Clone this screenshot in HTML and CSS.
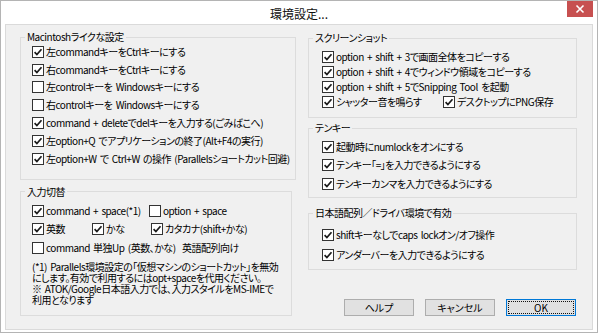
FILE: index.html
```html
<!DOCTYPE html>
<html lang="ja">
<head>
<meta charset="utf-8">
<title>環境設定...</title>
<link rel="stylesheet" href="styles.css">
</head>
<body>
<div class="window">
  <div class="titlebar">
    <span class="title">環境設定...</span>
    <span class="close"><svg width="10" height="10" viewBox="0 0 10 10"><path d="M1.5 1.5 L8.5 8.5 M8.5 1.5 L1.5 8.5" stroke="#fff" stroke-width="1.6"/></svg></span>
  </div>
  <div class="client">
    <div class="col col-left">
      <fieldset class="group g-mac">
        <legend>Macintoshライクな設定</legend>
        <div class="gbody">
          <div class="row"><span class="cb on"><svg viewBox="0 0 10 10"><path d="M1.6 5.2 L3.9 7.6 L8.5 2.2"/></svg></span><span class="lbl">左commandキーをCtrlキーにする</span></div>
          <div class="row"><span class="cb on"><svg viewBox="0 0 10 10"><path d="M1.6 5.2 L3.9 7.6 L8.5 2.2"/></svg></span><span class="lbl">右commandキーをCtrlキーにする</span></div>
          <div class="row"><span class="cb"></span><span class="lbl">左controlキーを Windowsキーにする</span></div>
          <div class="row"><span class="cb"></span><span class="lbl">右controlキーを Windowsキーにする</span></div>
          <div class="row"><span class="cb on"><svg viewBox="0 0 10 10"><path d="M1.6 5.2 L3.9 7.6 L8.5 2.2"/></svg></span><span class="lbl">command + deleteでdelキーを入力する(ごみばこへ)</span></div>
          <div class="row"><span class="cb on"><svg viewBox="0 0 10 10"><path d="M1.6 5.2 L3.9 7.6 L8.5 2.2"/></svg></span><span class="lbl">左option+Q でアプリケーションの終了(Alt+F4の実行)</span></div>
          <div class="row"><span class="cb on"><svg viewBox="0 0 10 10"><path d="M1.6 5.2 L3.9 7.6 L8.5 2.2"/></svg></span><span class="lbl">左option+W で Ctrl+W の操作 (Parallelsショートカット回避)</span></div>
        </div>
      </fieldset>
      <fieldset class="group g-input">
        <legend>入力切替</legend>
        <div class="gbody">
          <div class="row">
            <span class="item w117"><span class="cb on"><svg viewBox="0 0 10 10"><path d="M1.6 5.2 L3.9 7.6 L8.5 2.2"/></svg></span><span class="lbl">command + space(*1)</span></span>
            <span class="item"><span class="cb"></span><span class="lbl">option + space</span></span>
          </div>
          <div class="row">
            <span class="item w60"><span class="cb on"><svg viewBox="0 0 10 10"><path d="M1.6 5.2 L3.9 7.6 L8.5 2.2"/></svg></span><span class="lbl">英数</span></span>
            <span class="item w59"><span class="cb on"><svg viewBox="0 0 10 10"><path d="M1.6 5.2 L3.9 7.6 L8.5 2.2"/></svg></span><span class="lbl">かな</span></span>
            <span class="item"><span class="cb on"><svg viewBox="0 0 10 10"><path d="M1.6 5.2 L3.9 7.6 L8.5 2.2"/></svg></span><span class="lbl">カタカナ(shift+かな)</span></span>
          </div>
          <div class="row">
            <span class="item"><span class="cb"></span><span class="lbl">command 単独Up (英数、かな)&nbsp; 英語配列向け</span></span>
          </div>
          <p class="note note-first">(*1) Parallels環境設定の「仮想マシンのショートカット」を無効<br>にします。有効で利用するにはopt+spaceを代用ください。</p>
          <p class="note">※ ATOK/Google日本語入力では、入力スタイルをMS-IMEで<br>利用となります</p>
        </div>
      </fieldset>
    </div>
    <div class="col col-right">
      <fieldset class="group g-shot">
        <legend>スクリーンショット</legend>
        <div class="gbody">
          <div class="row"><span class="cb on"><svg viewBox="0 0 10 10"><path d="M1.6 5.2 L3.9 7.6 L8.5 2.2"/></svg></span><span class="lbl">option + shift + 3で画面全体をコピーする</span></div>
          <div class="row"><span class="cb on"><svg viewBox="0 0 10 10"><path d="M1.6 5.2 L3.9 7.6 L8.5 2.2"/></svg></span><span class="lbl">option + shift + 4でウィンドウ領域をコピーする</span></div>
          <div class="row"><span class="cb on"><svg viewBox="0 0 10 10"><path d="M1.6 5.2 L3.9 7.6 L8.5 2.2"/></svg></span><span class="lbl">option + shift + 5でSnipping Tool を起動</span></div>
          <div class="row row-last">
            <span class="item w121"><span class="cb on"><svg viewBox="0 0 10 10"><path d="M1.6 5.2 L3.9 7.6 L8.5 2.2"/></svg></span><span class="lbl">シャッター音を鳴らす</span></span>
            <span class="item"><span class="cb on"><svg viewBox="0 0 10 10"><path d="M1.6 5.2 L3.9 7.6 L8.5 2.2"/></svg></span><span class="lbl">デスクトップにPNG保存</span></span>
          </div>
        </div>
      </fieldset>
      <fieldset class="group g-ten">
        <legend>テンキー</legend>
        <div class="gbody">
          <div class="row"><span class="cb on"><svg viewBox="0 0 10 10"><path d="M1.6 5.2 L3.9 7.6 L8.5 2.2"/></svg></span><span class="lbl">起動時にnumlockをオンにする</span></div>
          <div class="row row-b"><span class="cb on"><svg viewBox="0 0 10 10"><path d="M1.6 5.2 L3.9 7.6 L8.5 2.2"/></svg></span><span class="lbl">テンキー「=」を入力できるようにする</span></div>
          <div class="row row-c"><span class="cb on"><svg viewBox="0 0 10 10"><path d="M1.6 5.2 L3.9 7.6 L8.5 2.2"/></svg></span><span class="lbl">テンキーカンマを入力できるようにする</span></div>
        </div>
      </fieldset>
      <fieldset class="group g-jp">
        <legend>日本語配列／ドライバ環境で有効</legend>
        <div class="gbody">
          <div class="row"><span class="cb on"><svg viewBox="0 0 10 10"><path d="M1.6 5.2 L3.9 7.6 L8.5 2.2"/></svg></span><span class="lbl">shiftキーなしでcaps lockオン/オフ操作</span></div>
          <div class="row row-c"><span class="cb on"><svg viewBox="0 0 10 10"><path d="M1.6 5.2 L3.9 7.6 L8.5 2.2"/></svg></span><span class="lbl">アンダーバーを入力できるようにする</span></div>
        </div>
      </fieldset>
      <div class="buttons">
        <button class="btn" type="button">ヘルプ</button>
        <button class="btn" type="button">キャンセル</button>
        <button class="btn btn-default" type="button">OK</button>
      </div>
    </div>
  </div>
</div>
</body>
</html>
```
FILE: styles.css
```css
html, body {
  margin: 0;
  padding: 0;
  background: #fff;
}
body {
  font-family: "Noto Sans CJK JP", "Noto Sans", sans-serif;
  font-size: 10px;
  letter-spacing: -0.5px;
  word-spacing: 1.5px;
  color: #000;
  font-feature-settings: "palt";
}
.window {
  width: 598px;
  height: 333px;
  box-sizing: border-box;
  border: 1px solid #b4b4b4;
  background: #fff;
  display: flex;
  flex-direction: column;
}
.titlebar {
  height: 23px;
  flex: none;
  display: grid;
  grid-template-columns: 1fr auto 1fr;
  align-items: start;
}
.title {
  grid-column: 2;
  font-size: 12px;
  line-height: 26px;
  letter-spacing: 0;
  color: #111;
}
.close {
  grid-column: 3;
  justify-self: end;
  width: 26px;
  height: 16px;
  margin-right: 4px;
  background: #c75050;
  display: flex;
  align-items: center;
  justify-content: center;
}
.client {
  flex: 1;
  margin: 0 4px 2px;
  border: 1px solid #dadada;
  background: #f0f0f0;
  padding: 0 0 0 14px;
  display: grid;
  grid-template-columns: 276px 269px;
  column-gap: 12px;
  align-items: start;
}
.col {
  display: flex;
  flex-direction: column;
}
.group {
  margin: 0;
  padding: 0;
  border: 1px solid #dcdcdc;
  min-width: 0;
}
.group legend {
  padding: 0 2px;
  margin-left: 4px;
  line-height: 14px;
  font-size: 10px;
}
.gbody {
  display: flex;
  flex-direction: column;
}
.row {
  display: flex;
  align-items: center;
  height: 17.8px;
  white-space: nowrap;
}
.item {
  display: flex;
  align-items: center;
}
.w117 { width: 117px; }
.w60 { width: 60px; }
.w59 { width: 59px; }
.w121 { width: 121px; }
.cb {
  width: 12px;
  height: 12px;
  box-sizing: border-box;
  border: 1px solid #333;
  background: #fff;
  flex: none;
  display: flex;
}
.cb svg {
  width: 10px;
  height: 10px;
  fill: none;
  stroke: #1a1a1a;
  stroke-width: 1.7;
}
.lbl {
  margin-left: 2px;
  line-height: 12px;
}
/* Macintosh group */
.g-mac {
  margin-top: 5px;
}
.g-mac .gbody {
  margin-top: -1px;
  padding: 0 0 11px 11px;
}
/* 入力切替 */
.g-input {
  width: 272px;
  box-sizing: border-box;
  margin-top: 5px;
}
.g-input .gbody {
  padding: 3px 0 10px 11px;
}
.g-input .row {
  height: 18.5px;
}
.note {
  margin: 0;
  line-height: 11px;
  white-space: nowrap;
}
.note-first {
  margin-top: 3.5px;
}
/* right column */
.g-shot {
  margin-top: 6px;
}
.g-shot .gbody {
  padding: 4px 0 7px 13px;
}
.g-shot .row {
  height: 15px;
}
.g-shot .row-last {
  height: 16px;
}
.g-ten {
  margin-top: 3px;
}
.g-ten .gbody {
  padding: 3px 0 4px 13px;
}
.g-ten .row {
  height: 18px;
}
.g-ten .row-b {
  height: 17px;
}
.g-ten .row-c,
.g-jp .row-c {
  margin-top: 2px;
}
.g-jp {
  margin-top: 8px;
}
.g-jp .gbody {
  padding: 6px 0 5px 13px;
}
.g-jp .row {
  height: 18px;
}
.buttons {
  margin-top: 29px;
  display: flex;
  justify-content: flex-end;
  gap: 11px;
  padding-right: 1px;
}
.btn {
  width: 70px;
  height: 17px;
  box-sizing: border-box;
  border: 1px solid #adadad;
  background: #e1e1e1;
  font-family: inherit;
  font-size: 10px;
  letter-spacing: 0;
  word-spacing: 0;
  line-height: 14px;
  padding: 0;
  color: #000;
  font-feature-settings: "palt";
}
.btn-default {
  border-color: #0078d7;
  outline: 1px dotted #111;
  outline-offset: -3px;
}
```
